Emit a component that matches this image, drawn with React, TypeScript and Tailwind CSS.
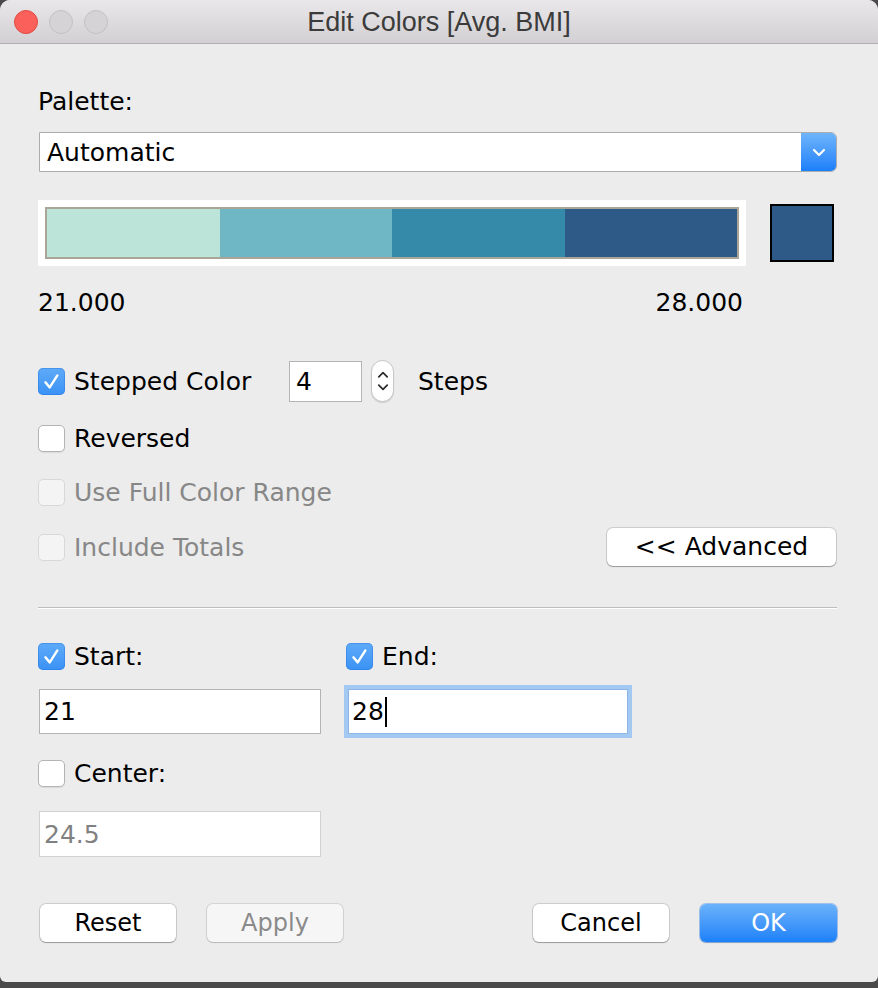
import React from "react";

type BoxState = "on" | "off" | "disabled";

function Check() {
  return (
    <svg width="21" height="21" viewBox="0 0 20 20" fill="none">
      <path d="M4.2 10.8 L8.3 15.6 L15.6 4.2" stroke="#fff" strokeWidth="2.3" strokeLinecap="round" strokeLinejoin="round" />
    </svg>
  );
}

function Box({ state }: { state: BoxState }) {
  if (state === "on") {
    return (
      <span className="flex h-[27px] w-[27px] shrink-0 items-center justify-center rounded-[5px] bg-gradient-to-b from-[#5eaaf8] to-[#3a92f5] shadow-[inset_0_0_0_1px_rgba(30,110,220,0.35)]">
        <Check />
      </span>
    );
  }
  if (state === "disabled") {
    return <span className="h-[27px] w-[27px] shrink-0 rounded-[5px] border border-[#d8d8d8] bg-[#f4f4f4]" />;
  }
  return <span className="h-[27px] w-[27px] shrink-0 rounded-[5px] border border-[#b4b4b4] bg-white shadow-[0_1px_1px_rgba(0,0,0,0.08)]" />;
}

function CheckRow({ state, label }: { state: BoxState; label: string }) {
  return (
    <div className="flex h-[30px] items-center gap-[9px] whitespace-nowrap">
      <Box state={state} />
      <span className={`pt-px ${state === "disabled" ? "text-[#878787]" : "text-black"}`}>{label}</span>
    </div>
  );
}

function Btn({ label, kind = "normal", w = "w-[136px]" }: { label: string; kind?: "normal" | "disabled" | "primary"; w?: string }) {
  const look =
    kind === "primary"
      ? "bg-gradient-to-b from-[#6ab2fa] to-[#1a80f9] text-white shadow-[0_0_0_1px_rgba(20,110,230,0.35),0_1px_1px_rgba(0,0,0,0.2)]"
      : kind === "disabled"
        ? "bg-[#f6f6f6] text-[#8a8a8a] shadow-[0_0_0_1px_rgba(0,0,0,0.1),0_1px_1px_rgba(0,0,0,0.12)]"
        : "bg-white text-black shadow-[0_0_0_1px_rgba(0,0,0,0.13),0_1px_1px_rgba(0,0,0,0.25)]";
  return (
    <div className={`flex h-[38px] ${w} items-center justify-center rounded-[6px] text-[24px] ${look}`}>{label}</div>
  );
}

function TitleBar() {
  return (
    <div className="relative flex h-[44px] shrink-0 items-center border-b border-[#b1afb1] bg-gradient-to-b from-[#e9e7e9] to-[#d2d0d2]">
      <div className="flex gap-[11px] pl-[14px]">
        <span className="h-[24px] w-[24px] rounded-full border border-[#df4a42] bg-[#fc605a]" />
        <span className="h-[24px] w-[24px] rounded-full border border-[#c2c0c2] bg-[#d5d3d5]" />
        <span className="h-[24px] w-[24px] rounded-full border border-[#c2c0c2] bg-[#d5d3d5]" />
      </div>
      <div className="absolute inset-0 flex items-center justify-center font-['Liberation_Sans',sans-serif] text-[27px] text-[#3b3b3b]">
        Edit Colors [Avg. BMI]
      </div>
    </div>
  );
}

const RAMP = ["#bde4d9", "#6fb7c4", "#358aa9", "#2d5a87"];

export default function App() {
  return (
    <div className="h-[988px] w-[878px] overflow-hidden bg-[#4a4a4a] font-['DejaVu_Sans',sans-serif] text-[25px] leading-[30px] text-black">
      <div className="flex h-[982px] flex-col overflow-hidden rounded-t-[10px] rounded-b-[6px] bg-[#ececec]">
        <TitleBar />

        <div className="flex flex-col pl-[38px] pr-[41px]">
          <div className="mt-[43px] h-[30px]">Palette:</div>

          {/* palette dropdown */}
          <div className="ml-px mt-[15px] flex h-[40px] overflow-hidden rounded-r-[6px] border border-[#acacac] bg-white">
            <div className="flex flex-1 items-center pl-[7px] pt-[2px]">Automatic</div>
            <div className="flex w-[35px] items-center justify-center bg-gradient-to-b from-[#6db4fb] to-[#1a7ffa]">
              <svg width="14" height="9" viewBox="0 0 14 9" fill="none">
                <path d="M2 2 L7 7 L12 2" stroke="#fff" strokeWidth="2.2" strokeLinecap="round" strokeLinejoin="round" />
              </svg>
            </div>
          </div>

          {/* colour ramp */}
          <div className="mt-[28px] flex items-center">
            <div className="h-[66px] w-[708px] bg-white px-[7px] py-[7px]">
              <div className="flex h-full border-2 border-[#a9a697]">
                {RAMP.map((c) => (
                  <div key={c} className="flex-1" style={{ background: c }} />
                ))}
              </div>
            </div>
            <div className="ml-[24px] h-[58px] w-[64px] border-2 border-black bg-[#2d5a87]" />
          </div>

          <div className="mt-[22px] flex w-[708px] justify-between pr-[3px]">
            <span>21.000</span>
            <span>28.000</span>
          </div>

          {/* stepped */}
          <div className="mt-[42px] flex h-[42px] items-center">
            <div className="w-[213px] shrink-0">
              <CheckRow state="on" label="Stepped Color" />
            </div>
            <div className="ml-[38px] flex h-[41px] w-[73px] items-center border border-[#b4b4b4] bg-white pl-[6px] pt-px">4</div>
            <div className="ml-[9px] flex h-[42px] w-[23px] flex-col items-center justify-center gap-[6px] rounded-[12px] border border-[#c6c6c6] bg-white shadow-[0_1px_1px_rgba(0,0,0,0.12)]">
              <svg width="12" height="7" viewBox="0 0 12 7" fill="none">
                <path d="M1.8 5.8 L6 1.6 L10.2 5.8" stroke="#2a2a2a" strokeWidth="1.7" strokeLinecap="round" strokeLinejoin="round" />
              </svg>
              <svg width="12" height="7" viewBox="0 0 12 7" fill="none">
                <path d="M1.8 1.2 L6 5.4 L10.2 1.2" stroke="#2a2a2a" strokeWidth="1.7" strokeLinecap="round" strokeLinejoin="round" />
              </svg>
            </div>
            <span className="ml-[24px] pt-px">Steps</span>
          </div>

          <div className="mt-[21px]">
            <CheckRow state="off" label="Reversed" />
          </div>
          <div className="mt-[24px]">
            <CheckRow state="disabled" label="Use Full Color Range" />
          </div>
          <div className="mt-[20px] flex h-[40px] items-center justify-between pr-px">
            <CheckRow state="disabled" label="Include Totals" />
            <Btn label="<< Advanced" w="w-[229px] text-[25px]" />
          </div>

          <div className="mt-[40px] h-[2px] border-t border-b border-t-[#bebebe] border-b-white" />

          {/* range */}
          <div className="mt-[32px] flex">
            <div className="w-[308px] shrink-0">
              <CheckRow state="on" label="Start:" />
            </div>
            <CheckRow state="on" label="End:" />
          </div>

          <div className="mt-[18px] flex items-start">
            <div className="ml-px flex h-[45px] w-[282px] items-center border border-[#b4b4b4] bg-white pl-[4px] pt-px">21</div>
            <div className="ml-[27px] flex h-[45px] w-[280px] items-center border border-[#8db6e6] bg-white pl-[3px] pt-px shadow-[0_0_0_4px_#a3c8f1]">
              <span>28</span>
              <span className="ml-px h-[30px] w-[2px] bg-black" />
            </div>
          </div>

          <div className="mt-[24px]">
            <CheckRow state="off" label="Center:" />
          </div>
          <div className="ml-px mt-[23px] flex h-[46px] w-[282px] items-center border border-[#d2d2d2] bg-white pl-[4px] pt-px text-[#818181]">
            24.5
          </div>

          {/* footer buttons */}
          <div className="mt-[47px] flex items-center justify-between">
            <div className="ml-[2px] flex gap-[31px]">
              <Btn label="Reset" />
              <Btn label="Apply" kind="disabled" />
            </div>
            <div className="flex gap-[31px]">
              <Btn label="Cancel" />
              <Btn label="OK" kind="primary" w="w-[137px]" />
            </div>
          </div>
        </div>
      </div>
    </div>
  );
}
